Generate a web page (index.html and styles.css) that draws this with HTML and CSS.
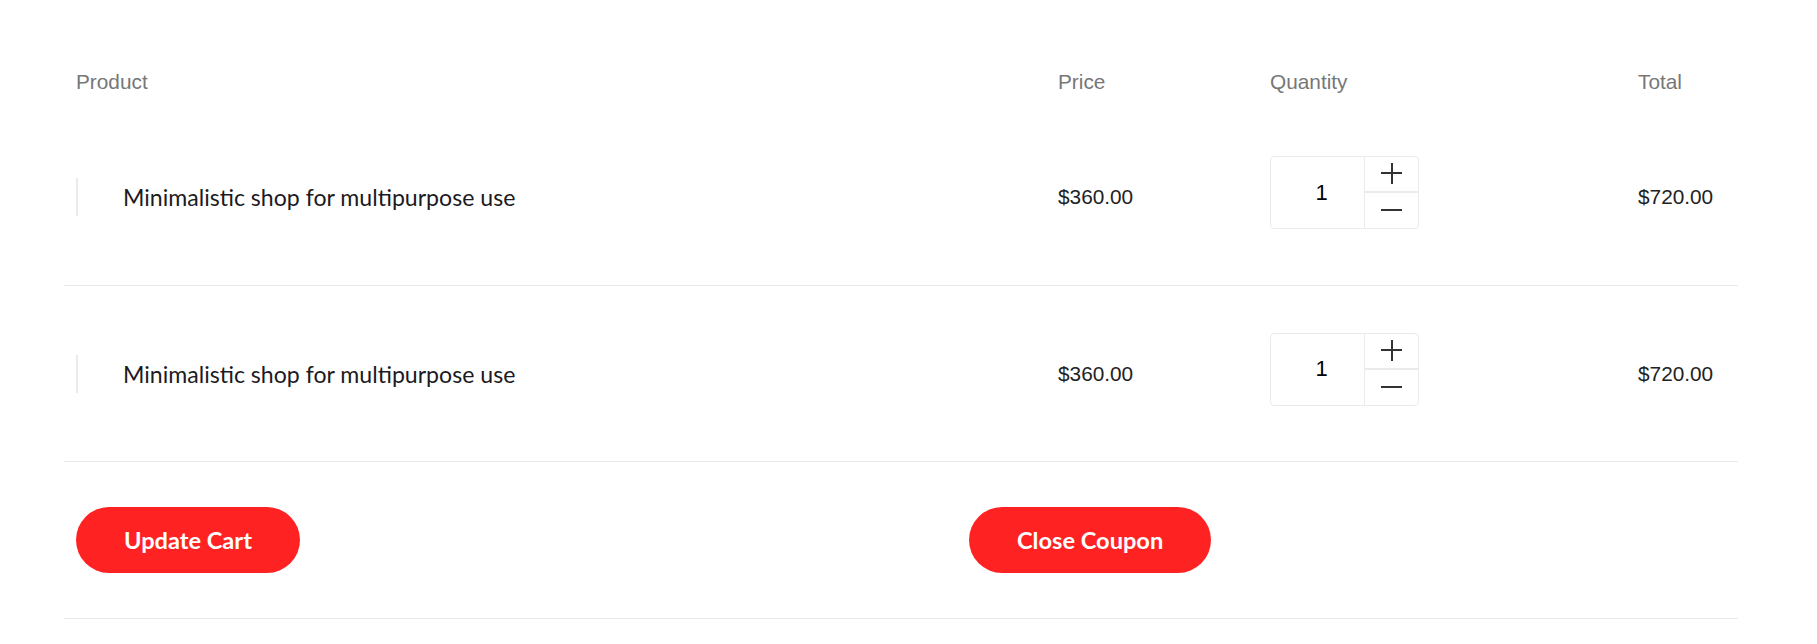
FILE: index.html
```html
<!DOCTYPE html>
<html lang="en">
<head>
<meta charset="utf-8">
<title>Cart</title>
<link rel="stylesheet" href="styles.css">
</head>
<body>
<div class="cart">
  <div class="row head">
    <div class="cell">Product</div>
    <div class="cell">Price</div>
    <div class="cell">Quantity</div>
    <div class="cell">Total</div>
  </div>
  <div class="row item">
    <div class="cell product">
      <span class="thumb"></span>
      <span class="name">Minimalistic shop for multipurpose use</span>
    </div>
    <div class="cell money">$360.00</div>
    <div class="cell">
      <div class="qty">
        <div class="qty-val">1</div>
        <div class="qty-btns">
          <button class="qty-btn plus" aria-label="increase"></button>
          <button class="qty-btn minus" aria-label="decrease"></button>
        </div>
      </div>
    </div>
    <div class="cell money">$720.00</div>
  </div>
  <div class="row item">
    <div class="cell product">
      <span class="thumb"></span>
      <span class="name">Minimalistic shop for multipurpose use</span>
    </div>
    <div class="cell money">$360.00</div>
    <div class="cell">
      <div class="qty">
        <div class="qty-val">1</div>
        <div class="qty-btns">
          <button class="qty-btn plus" aria-label="increase"></button>
          <button class="qty-btn minus" aria-label="decrease"></button>
        </div>
      </div>
    </div>
    <div class="cell money">$720.00</div>
  </div>
  <div class="actions">
    <div><button class="pill">Update Cart</button></div>
    <div><button class="pill">Close Coupon</button></div>
  </div>
</div>
</body>
</html>
```

FILE: styles.css
```css
* { box-sizing: border-box; }
html, body { margin: 0; padding: 0; background: #fff; }
body { font-family: "Liberation Sans", Arial, sans-serif; }

.cart {
  width: 1674px;
  margin-left: 64px;
  padding-top: 55px;
}

.row {
  display: grid;
  grid-template-columns: 982px 212px 368px 112px;
  align-items: center;
}
.cell { padding: 0 12px; }

.head {
  height: 54px;
  color: #777;
  font-size: 20.8px;
}

.item {
  height: 177px;
  border-bottom: 1px solid #ebebeb;
}
.item + .item { height: 176px; }

.product {
  display: flex;
  align-items: center;
}
.thumb {
  display: block;
  width: 2px;
  height: 38px;
  background: #ebebeb;
  margin-right: 45px;
}
.name {
  font-family: "Lato", sans-serif;
  font-size: 23.1px;
  color: #1c1a22;
}

.money {
  font-size: 20.8px;
  color: #222;
}

.qty {
  display: flex;
  width: 149px;
  height: 73px;
  border: 1px solid #ebebeb;
  border-radius: 4px;
  margin-bottom: 9px;
}
.qty-val {
  flex: 0 0 94px;
  display: flex;
  align-items: center;
  justify-content: center;
  padding-left: 8px;
  font-size: 22px;
  color: #000;
  border-right: 1px solid #ebebeb;
}
.qty-btns {
  flex: 1;
  display: flex;
  flex-direction: column;
}
.qty-btn {
  flex: 1;
  position: relative;
  border: 0;
  background: transparent;
  padding: 0;
}
.plus { height: 36px; flex: none; border-bottom: 2px solid #ebebeb; }
.qty-btn::before,
.plus::after {
  content: "";
  position: absolute;
  background: #333;
}
.qty-btn::before {
  width: 21px;
  height: 2px;
  left: 16px;
  top: 15px;
}
.minus::before { top: 16px; }
.plus::after {
  width: 2px;
  height: 21px;
  left: 26px;
  top: 6px;
}

.actions {
  display: grid;
  grid-template-columns: 893px 1fr;
  align-items: center;
  height: 157px;
  padding: 0 12px;
  border-bottom: 1px solid #ebebeb;
}
.pill {
  height: 66px;
  padding: 0 48px;
  border: 0;
  border-radius: 33px;
  background: #ff2222;
  color: #fff;
  font-family: "Lato", sans-serif;
  font-weight: 700;
  font-size: 23.6px;
}
```
